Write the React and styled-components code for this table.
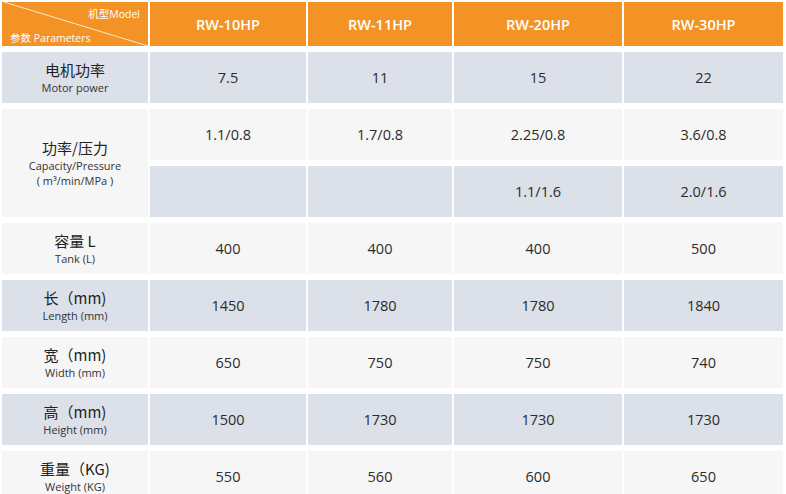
import React from "react";
import styled, { createGlobalStyle } from "styled-components";

const GlobalStyle = createGlobalStyle`
  html, body {
    margin: 0;
    padding: 0;
    background: #fff;
  }
  body {
    font-family: "Open Sans", "Noto Sans CJK SC", sans-serif;
    color: #2b2b2b;
  }
`;

const Table = styled.div`
  display: grid;
  grid-template-columns: 146px 156px 144px 168px 159px;
  grid-template-rows: 44px repeat(8, 51px);
  column-gap: 2px;
  row-gap: 6px;
  padding: 2px;
  width: 781px;
`;

const HeadCell = styled.div`
  background: #f39325;
  color: #fff;
  display: flex;
  align-items: center;
  justify-content: center;
  font-size: 14.5px;
  font-weight: 600;
`;

const CornerCell = styled.div`
  position: relative;
  background: #f39325;
  color: #fff;
  font-size: 10.5px;
  display: flex;
  flex-direction: column;
  justify-content: space-between;
  padding: 4px 8px 1px 8px;
  box-sizing: border-box;
`;

const CornerTop = styled.span`
  align-self: flex-end;
`;

const CornerBottom = styled.span`
  align-self: flex-start;
`;

const Diagonal = styled.svg`
  position: absolute;
  inset: 0;
  width: 100%;
  height: 100%;
`;

const Cell = styled.div`
  background: ${(p) => (p.$shade ? "#dce0e9" : "#f6f6f6")};
  display: flex;
  flex-direction: column;
  align-items: center;
  justify-content: center;
  font-size: 14.5px;
  grid-row: ${(p) => (p.$span ? `span ${p.$span}` : "auto")};
`;

const LabelZh = styled.span`
  font-family: "Noto Sans CJK SC", sans-serif;
  font-size: 15px;
  line-height: 20px;
  color: #222;
`;

const LabelEn = styled.span`
  font-size: 11px;
  line-height: 15px;
  color: #333;
`;

const models = ["RW-10HP", "RW-11HP", "RW-20HP", "RW-30HP"];

const rows = [
  { zh: "电机功率", en: ["Motor power"], values: ["7.5", "11", "15", "22"], shade: true },
  { zh: "容量  L", en: ["Tank (L)"], values: ["400", "400", "400", "500"], shade: false },
  { zh: "长（mm)", en: ["Length (mm)"], values: ["1450", "1780", "1780", "1840"], shade: true },
  { zh: "宽（mm)", en: ["Width (mm)"], values: ["650", "750", "750", "740"], shade: false },
  { zh: "高（mm)", en: ["Height (mm)"], values: ["1500", "1730", "1730", "1730"], shade: true },
  { zh: "重量（KG)", en: ["Weight (KG)"], values: ["550", "560", "600", "650"], shade: false },
];

const Label = ({ zh, en }) => (
  <>
    <LabelZh>{zh}</LabelZh>
    {en.map((t) => (
      <LabelEn key={t}>{t}</LabelEn>
    ))}
  </>
);

const Row = ({ row }) => (
  <>
    <Cell $shade={row.shade}>
      <Label zh={row.zh} en={row.en} />
    </Cell>
    {row.values.map((v, i) => (
      <Cell key={i} $shade={row.shade}>{v}</Cell>
    ))}
  </>
);

export default function App() {
  return (
    <>
      <GlobalStyle />
      <Table>
        <CornerCell>
          <Diagonal viewBox="0 0 146 44" preserveAspectRatio="none">
            <line x1="2" y1="0" x2="146" y2="44" stroke="#fff" strokeWidth="0.8" />
          </Diagonal>
          <CornerTop>机型Model</CornerTop>
          <CornerBottom>参数 Parameters</CornerBottom>
        </CornerCell>
        {models.map((m) => (
          <HeadCell key={m}>{m}</HeadCell>
        ))}

        <Row row={rows[0]} />

        <Cell $span={2}>
          <Label zh="功率/压力" en={["Capacity/Pressure", "( m³/min/MPa )"]} />
        </Cell>
        <Cell>1.1/0.8</Cell>
        <Cell>1.7/0.8</Cell>
        <Cell>2.25/0.8</Cell>
        <Cell>3.6/0.8</Cell>
        <Cell $shade />
        <Cell $shade />
        <Cell $shade>1.1/1.6</Cell>
        <Cell $shade>2.0/1.6</Cell>

        {rows.slice(1).map((r) => (
          <Row key={r.zh} row={r} />
        ))}
      </Table>
    </>
  );
}
